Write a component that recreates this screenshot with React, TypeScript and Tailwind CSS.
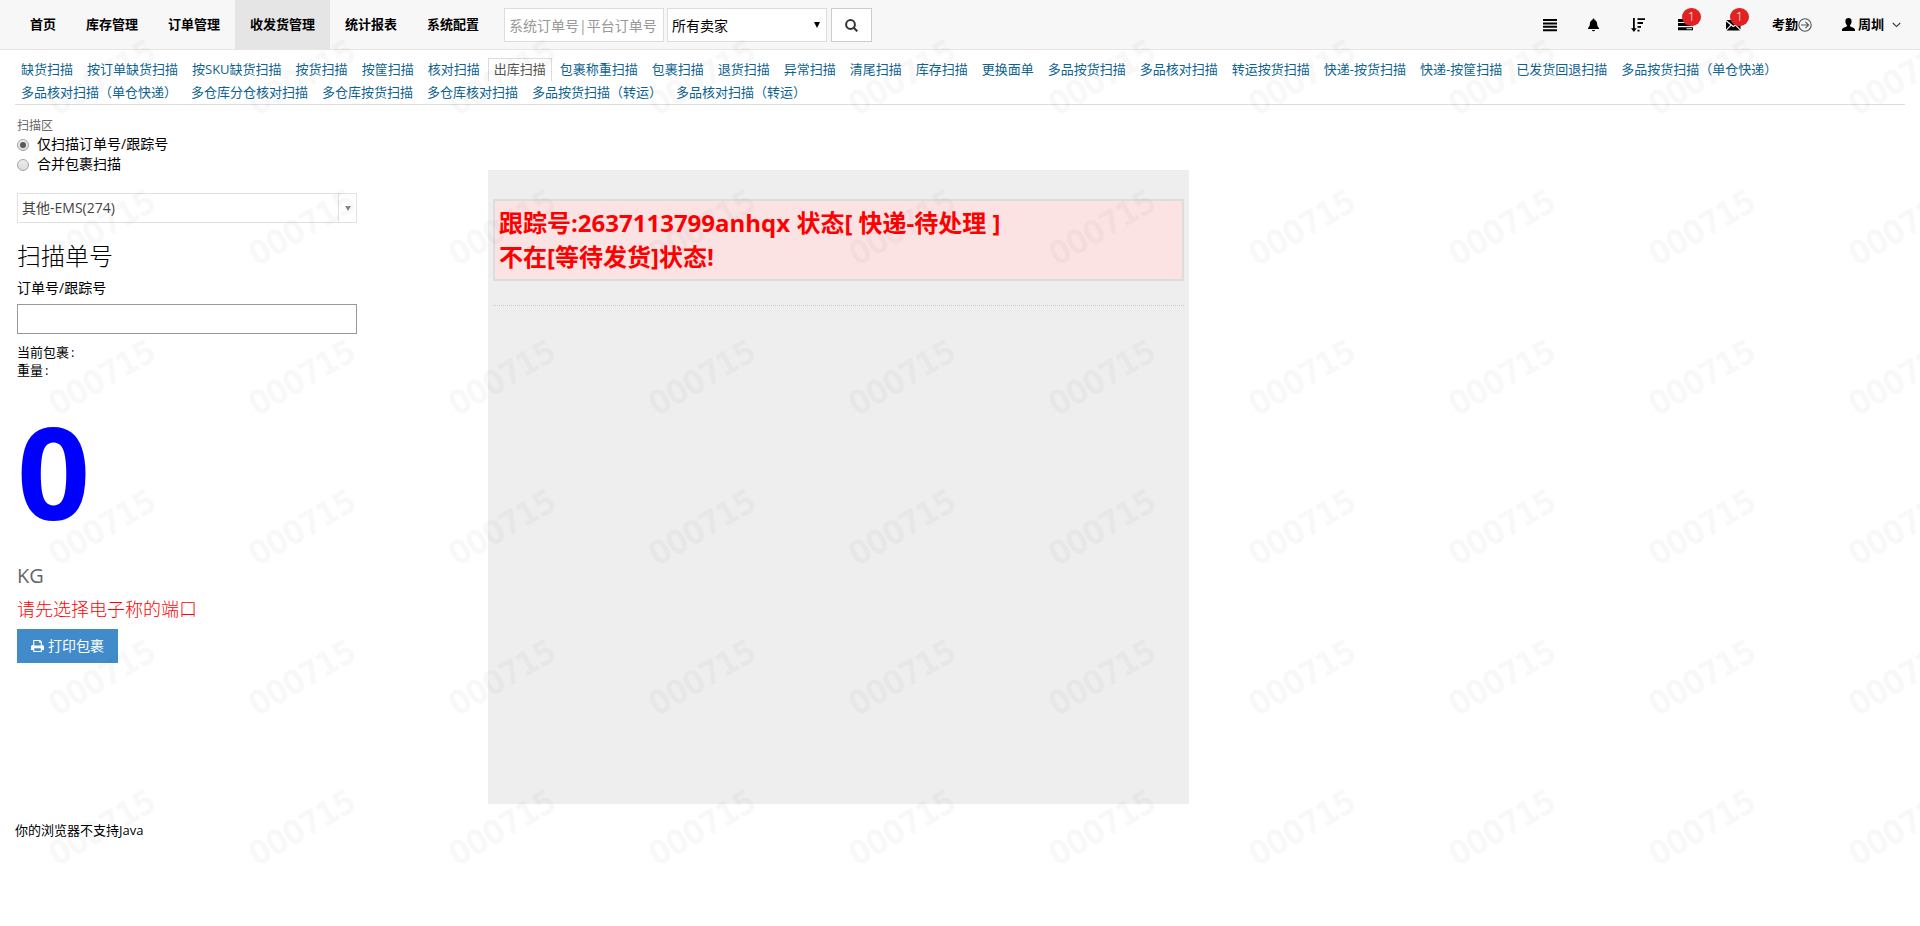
import React from "react";

const NAV = ["首页", "库存管理", "订单管理", "收发货管理", "统计报表", "系统配置"];

const TABS_TOP = [
  "缺货扫描", "按订单缺货扫描", "按SKU缺货扫描", "按货扫描", "按筐扫描", "核对扫描", "出库扫描",
  "包裹称重扫描", "包裹扫描", "退货扫描", "异常扫描", "清尾扫描", "库存扫描", "更换面单",
  "多品按货扫描", "多品核对扫描", "转运按货扫描", "快递-按货扫描", "快递-按筐扫描",
  "已发货回退扫描", "多品按货扫描（单仓快递）",
];
const TABS_BOTTOM = [
  "多品核对扫描（单仓快递）", "多仓库分仓核对扫描", "多仓库按货扫描", "多仓库核对扫描",
  "多品按货扫描（转运）", "多品核对扫描（转运）",
];

function Watermark() {
  return (
    <svg className="pointer-events-none absolute inset-0 h-[926px] w-[1920px]" aria-hidden="true">
      {[77, 227, 377, 527, 677, 827].map((y) =>
        Array.from({ length: 10 }, (_, i) => 102 + i * 200).map((x) => (
          <text
            key={x + "-" + y}
            transform={`translate(${x} ${y}) rotate(-30)`}
            textAnchor="middle"
            y="11"
            fontSize="30.500"
            fontFamily="DejaVu Sans, sans-serif"
            fill="#000"
            stroke="#000"
            strokeWidth="1.700"
            opacity="0.024"
          >
            000715
          </text>
        ))
      )}
    </svg>
  );
}

function Badge() {
  return (
    <span className="absolute -top-[10px] left-[4px] flex h-[18px] w-[19px] items-center justify-center rounded-full bg-[#e02222] text-[12px] font-light leading-none text-white">
      1
    </span>
  );
}

function TopIcons() {
  return (
    <div className="flex h-[49px] items-center">
      <svg className="mr-[31px] h-[14px] w-[14px]" viewBox="0 0 14 14">
        <path d="M0 1h14v2H0zM0 4.4h14v2H0zM0 7.8h14v2H0zM0 11.2h14v2H0z" />
      </svg>
      <svg className="mr-[32px] h-[14px] w-[11px]" viewBox="0 0 11 14">
        <path d="M4.5 1.5a1 1 0 0 1 2 0v.4C8.400 2.500 9 4 9.100 5.700c.1 2 .4 2.900 1.900 4.300v1H0v-1c1.500-1.400 1.800-2.300 1.900-4.300C2 4 2.600 2.500 4.500 1.900zM4 12h3a1.500 1.200 0 0 1-3 0z" />
      </svg>
      <svg className="mr-[33px] h-[14px] w-[14px]" viewBox="0 0 14 14">
        <path d="M2 0h1.800v10.200h2L2.900 14 0 10.200h2zM6.500.2H14v1.900H6.500zM6.500 4h5.500v1.900H6.500zM6.500 7.900H10v1.900H6.500zM6.500 11.700h2v1.900h-2z" />
      </svg>
      <div className="relative mr-[33px] h-[13px] w-[15px]">
        <svg className="h-[13px] w-[15px]" viewBox="0 0 15 13">
          <path fillRule="evenodd" d="M0 1h15v3H0zM0 5h15v3H0zM0 9.200h15v3H0zM9 6h5v1H9zM8.500 10.200H14v1H8.500z" />
        </svg>
        <Badge />
      </div>
      <div className="relative mr-[31px] h-[13px] w-[15px]">
        <svg className="h-[13px] w-[15px]" viewBox="0 0 15 13">
          <path d="M0 3.500 4.300 7 0 11.500zM.3 2h13.900L7.300 7.800zM5.200 7.700l2.100 1.600 2.100-1.600 4.600 4.700H.6zM14.500 3.500 10.300 7l4.200 4.500z" />
        </svg>
        <Badge />
      </div>
      <span className="text-[13px] font-bold">考勤</span>
      <svg className="mr-[30px] h-[14px] w-[14px]" viewBox="0 0 14 14" fill="none" stroke="#555" strokeWidth="1.1">
        <circle cx="7" cy="7" r="6.200" />
        <path d="M3 7h7.500M7.400 3.900 10.600 7l-3.200 3.100" />
      </svg>
      <svg className="mr-[3px] h-[13px] w-[13px]" viewBox="0 0 13 13">
        <path d="M6.500 0C8.500 0 9.600 1.200 9.600 3.200c0 1.700-.7 3.100-1.500 3.900v1.200c.8.900 4.900 1.500 4.900 3.500V13H0v-1.200c0-2 4.100-2.600 4.900-3.500V7.100C4.100 6.300 3.400 4.900 3.400 3.200 3.400 1.200 4.500 0 6.500 0z" />
      </svg>
      <span className="text-[13px] font-bold">周圳</span>
      <svg className="ml-[8px] h-[6px] w-[9px]" viewBox="0 0 9 6" fill="none" stroke="#333" strokeWidth="1.1">
        <path d="M.8 1l3.700 3.600L8.200 1" />
      </svg>
    </div>
  );
}

function Header() {
  return (
    <header className="flex h-[50px] border-b border-[#e5e5e5] bg-[#f7f7f7] pl-[15px] pr-[19px]">
      <nav className="flex">
        {NAV.map((n) => (
          <a
            key={n}
            className={
              n === "收发货管理"
                ? "flex items-center bg-[#e5e5e5] px-[15px] text-[13px] font-bold"
                : "flex items-center px-[15px] text-[13px] font-bold"
            }
          >
            {n}
          </a>
        ))}
      </nav>
      <div className="ml-[10px] mt-[8px] flex h-[34px] flex-1">
        <div className="flex w-[160px] items-center overflow-hidden whitespace-nowrap border border-[#ddd] bg-white pl-[4px] text-[14px] text-[#999]">
          系统订单号|平台订单号
        </div>
        <div className="ml-[3px] flex w-[160px] items-center justify-between border border-[#ddd] bg-white pl-[4px] pr-[6px] text-[14px]">
          所有卖家
          <svg className="h-[6px] w-[6px]" viewBox="0 0 6 6"><path d="M0 0h6L3 6z" /></svg>
        </div>
        <div className="ml-[4px] flex w-[41px] items-center justify-center border border-[#ccc] bg-white">
          <svg className="h-[13px] w-[13px]" viewBox="0 0 13 13" fill="none" stroke="#333" strokeWidth="2">
            <circle cx="5.500" cy="5.500" r="4.400" />
            <path d="M8.700 8.700l3.600 3.600" />
          </svg>
        </div>
      </div>
      <TopIcons />
    </header>
  );
}

function TabRow({ items }: { items: string[] }) {
  return (
    <div className="flex h-[23px] gap-[2px] whitespace-nowrap text-[13px] leading-[20px] text-[#0d638f]">
      {items.map((t) => (
        <a
          key={t}
          className={
            t === "出库扫描"
              ? "border border-b-0 border-[#ddd] bg-white px-[5px] text-[#555]"
              : "border border-b-0 border-transparent px-[5px]"
          }
        >
          {t}
        </a>
      ))}
    </div>
  );
}

function Radio({ checked, label }: { checked?: boolean; label: string }) {
  return (
    <label className="flex h-[20px] items-center text-[14px]">
      <span className="mr-[8px] flex h-[12px] w-[12px] items-center justify-center rounded-full border border-[#a5a5a5] bg-gradient-to-b from-[#ededed] to-[#dcdcdc]">
        {checked && <span className="h-[6px] w-[6px] rounded-full bg-[#5a5a5a]" />}
      </span>
      <span className="pb-[2px] leading-[18px]">{label}</span>
    </label>
  );
}

function ScanForm() {
  return (
    <section className="flex w-[340px] flex-col">
      <div className="h-[18px] text-[12px] leading-[18px] text-[#666]">扫描区</div>
      <Radio checked label="仅扫描订单号/跟踪号" />
      <Radio label="合并包裹扫描" />
      <div className="mt-[18px] flex h-[30px] border border-[#e2e2e2]">
        <div className="flex-1 pl-[4px] text-[14px] leading-[28px] text-[#444]">其他-EMS(274)</div>
        <div className="flex w-[18px] items-center justify-center border-l border-[#e2e2e2]">
          <svg className="h-[5px] w-[6px]" viewBox="0 0 6 5"><path d="M0 0h6L3 5z" fill="#888" /></svg>
        </div>
      </div>
      <h3 className="mt-[16px] h-[36px] text-[24px] font-light leading-[34px]">扫描单号</h3>
      <div className="mt-[4px] h-[20px] text-[14px] leading-[18px]">订单号/跟踪号</div>
      <div className="mt-[5px] h-[30px] border border-[#999] bg-white" />
      <div className="mt-[9px] text-[13px] leading-[18px]">
        当前包裹<span className="pl-[2px]">:</span>
      </div>
      <div className="text-[13px] leading-[18px]">
        重量<span className="pl-[2px]">:</span>
      </div>
      <div className="mt-[5px] h-[174px] text-[128px] font-bold leading-[174px] text-[#00f]">0</div>
      <div className="mt-[3px] h-[30px] text-[20px] leading-[30px] text-[#666]">KG</div>
      <div className="mt-[5px] h-[26px] text-[18px] font-light leading-[26px] text-[#f00]">请先选择电子称的端口</div>
      <button className="mt-[7px] flex h-[34px] w-[101px] items-center bg-[#428bca] pl-[14px] text-[14px] text-white">
        <svg className="mr-[4px] h-[12px] w-[13px]" viewBox="0 0 13 12" fill="#fff">
          <path fillRule="evenodd" d="M2.200 0h7l1.700 1.700V5h.3A1.800 1.800 0 0 1 13 6.800V10h-2.100v2H2.200v-2H0V6.800A1.800 1.800 0 0 1 1.800 5h.4zM3.300 1.100v4.500h6.500V2.700H8.200V1.100zM3.300 8.200v2.700h6.500V8.200z" />
        </svg>
        <span className="pb-[2px]">打印包裹</span>
      </button>
    </section>
  );
}

export default function App() {
  return (
    <div className="relative h-[926px] w-[1920px] overflow-hidden bg-white font-['Open_Sans','Noto_Sans_CJK_SC',sans-serif] text-black">
      <Header />
      <div className="mx-[15px] h-[55px] border-b border-[#ddd] pt-[8px]">
        <TabRow items={TABS_TOP} />
        <TabRow items={TABS_BOTTOM} />
      </div>
      <main className="flex h-[699px] items-start pl-[17px] pt-[12px]">
        <ScanForm />
        <section className="ml-[131px] mt-[53px] h-[634px] w-[701px] bg-[#eee] px-[5px] pt-[29px]">
          <div className="h-[82px] border-2 border-[#ddd] bg-[#fbe3e4] px-[4px] pt-[5px] text-[24px] font-bold leading-[34px] text-[#f00]">
            <div>跟踪号:2637113799anhqx 状态[ 快递-待处理 ]</div>
            <div>不在[等待发货]状态!</div>
          </div>
          <div className="mt-[24px] border-t border-dotted border-[#ccc]" />
        </section>
      </main>
      <footer className="pl-[15px] pt-[16px] text-[13px] leading-[20px]">你的浏览器不支持Java</footer>
      <Watermark />
    </div>
  );
}
